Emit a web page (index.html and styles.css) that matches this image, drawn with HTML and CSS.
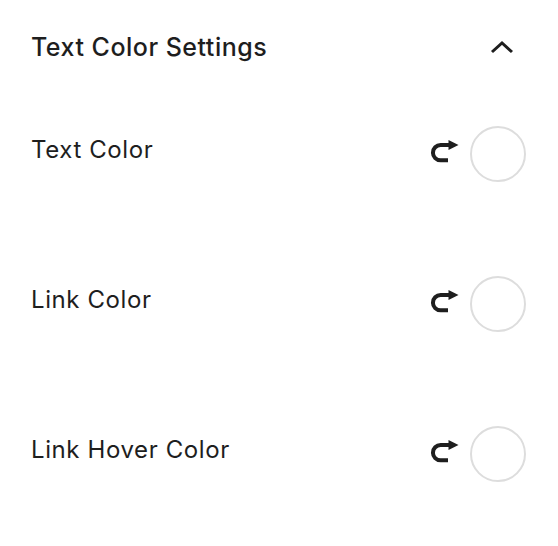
FILE: index.html
```html
<!DOCTYPE html>
<html lang="en">
<head>
    <meta charset="UTF-8">
    <title>Text Color Settings</title>
    <link rel="stylesheet" href="styles.css">
</head>
<body>
    <div class="panel">
        <div class="panel-header">
            <h2 class="panel-title">Text Color Settings</h2>
            <svg class="chevron" width="24" height="14" viewBox="0 0 24 14">
                <path d="M2 12 L12 3 L22 12" fill="none" stroke="#1e1e1e" stroke-width="3"/>
            </svg>
        </div>

        <div class="color-row">
            <span class="color-label">Text Color</span>
            <div class="color-controls">
                <svg class="reset" width="30" height="26" viewBox="0 0 30 26">
                    <path d="M19 6 H10.6 A7.6 7.6 0 0 0 10.6 21.3 H18" fill="none" stroke="#1e1e1e" stroke-width="4"/>
                    <path d="M18.5 1 L28.5 6 L18.5 11 Z" fill="#1e1e1e"/>
                </svg>
                <span class="swatch"></span>
            </div>
        </div>

        <div class="color-row">
            <span class="color-label">Link Color</span>
            <div class="color-controls">
                <svg class="reset" width="30" height="26" viewBox="0 0 30 26">
                    <path d="M19 6 H10.6 A7.6 7.6 0 0 0 10.6 21.3 H18" fill="none" stroke="#1e1e1e" stroke-width="4"/>
                    <path d="M18.5 1 L28.5 6 L18.5 11 Z" fill="#1e1e1e"/>
                </svg>
                <span class="swatch"></span>
            </div>
        </div>

        <div class="color-row">
            <span class="color-label">Link Hover Color</span>
            <div class="color-controls">
                <svg class="reset" width="30" height="26" viewBox="0 0 30 26">
                    <path d="M19 6 H10.6 A7.6 7.6 0 0 0 10.6 21.3 H18" fill="none" stroke="#1e1e1e" stroke-width="4"/>
                    <path d="M18.5 1 L28.5 6 L18.5 11 Z" fill="#1e1e1e"/>
                </svg>
                <span class="swatch"></span>
            </div>
        </div>
    </div>
</body>
</html>
```

FILE: styles.css
```css
body {
    margin: 0;
    background: #fff;
    font-family: Inter, "Noto Sans", sans-serif;
    color: #1e1e1e;
}
.panel {
    padding: 0 32px 0 31px;
}
.panel-header {
    display: flex;
    justify-content: space-between;
    align-items: center;
    height: 94px;
}
.panel-title {
    margin: 0;
    font-size: 25px;
    font-weight: 500;
    letter-spacing: 0.5px;
}
.chevron {
    margin-right: 12px;
}
.color-row {
    display: flex;
    justify-content: space-between;
    align-items: flex-start;
    height: 150px;
    padding-top: 32px;
    box-sizing: border-box;
}
.color-label {
    font-size: 24px;
    line-height: 56px;
    margin-top: -4px;
    letter-spacing: 0.6px;
}
.color-controls {
    display: flex;
    align-items: center;
    gap: 10px;
}
.reset {
    margin-bottom: 4px;
}
.swatch {
    width: 52px;
    height: 52px;
    border: 2px solid #ddd;
    border-radius: 50%;
}
```
